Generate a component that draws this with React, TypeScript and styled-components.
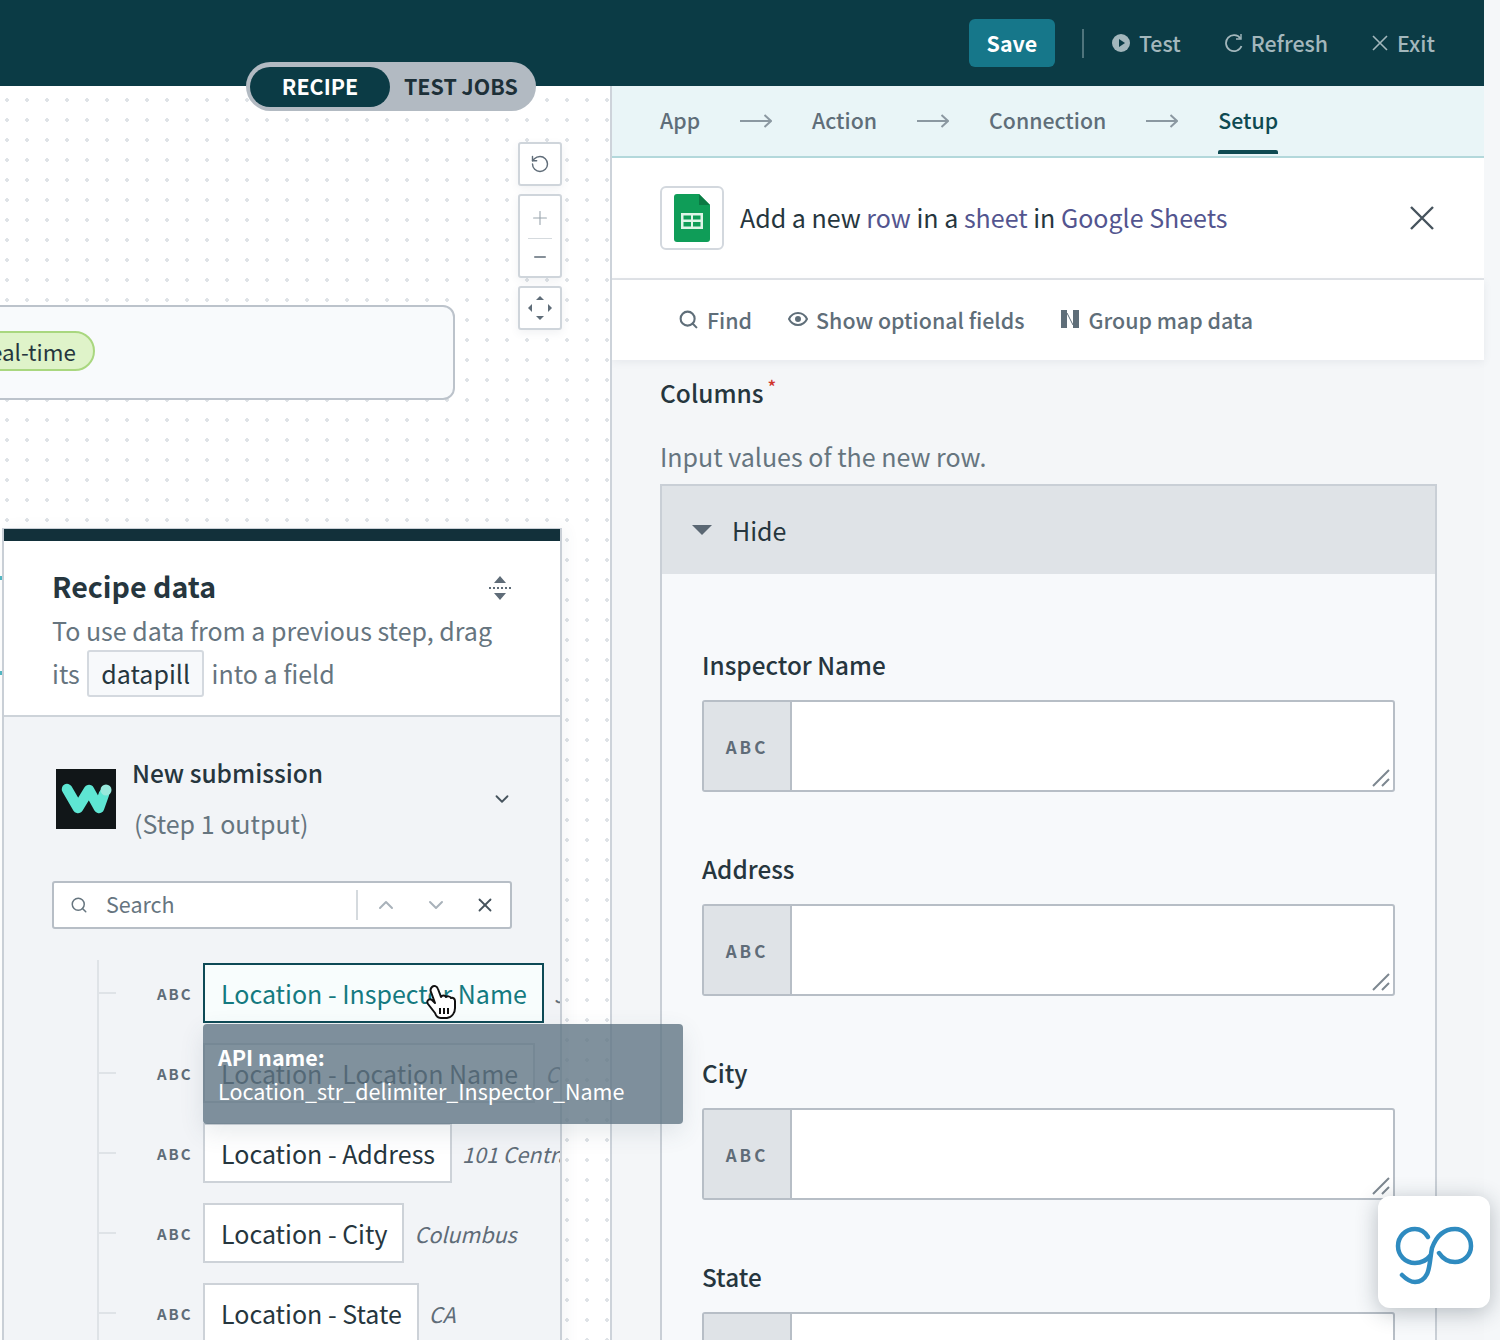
import React from "react"
import styled, { createGlobalStyle } from "styled-components"
import { ChevronDown, ChevronUp, Minus, Plus, RotateCcw, Search, X } from "lucide-react"

const font = `"Noto Sans CJK SC", "Noto Sans", sans-serif`

const Global = createGlobalStyle`
    html, body {
        margin: 0;
        padding: 0;
        background: #f5f7f9;
    }
    * {
        box-sizing: border-box;
    }
`

const Page = styled.div`
    position: relative;
    width: 1500px;
    height: 1340px;
    overflow: hidden;
    font-family: ${font};
    color: #26363e;
    background: #f5f7f9;
`
const Main = styled.div`
    width: 1484px;
    height: 100%;
    display: flex;
    flex-direction: column;
`
const Header = styled.header`
    flex: 0 0 86px;
    background: #0b3b45;
    display: flex;
    align-items: center;
    justify-content: flex-end;
    padding-right: 49px;
`
const SaveButton = styled.button`
    width: 86px;
    height: 48px;
    border: 0;
    border-radius: 6px;
    background: #16778a;
    color: #fff;
    font: 700 21.400px/46px ${font};
    padding: 0;
`
const Separator = styled.span`
    width: 2px;
    height: 29px;
    margin: 0 28px 0 27px;
    background: #4f747c;
`
const HeaderAction = styled.span<{ $gap?: number }>`
    display: flex;
    align-items: center;
    gap: ${p => p.$gap ?? 9}px;
    color: #a3b7bc;
    font-size: 21.400px;
    font-weight: 500;
    line-height: 28px;
    margin-left: ${p => (p.$gap ? 44 : 0)}px;
`
const Toggle = styled.div`
    position: absolute;
    left: 246px;
    top: 62px;
    width: 290px;
    height: 49px;
    padding: 4px;
    display: flex;
    align-items: center;
    border-radius: 25px;
    background: #b2bac2;
    font-size: 21.400px;
    font-weight: 700;
    z-index: 3;
`
const ToggleOn = styled.span`
    width: 140px;
    height: 40px;
    line-height: 38px;
    text-align: center;
    border-radius: 20px;
    background: #0b3b45;
    color: #fff;
`
const ToggleOff = styled.span`
    margin-left: 14px;
    margin-top: -2px;
    color: #1d3038;
`
const Body = styled.div`
    flex: 1;
    min-height: 0;
    display: flex;
`
const Canvas = styled.div`
    position: relative;
    flex: 0 0 612px;
    border-right: 2px solid #cdd3da;
    background-color: #fff;
    background-image: radial-gradient(circle, #dfe3e7 1.6px, transparent 2px);
    background-size: 20px 20px;
    background-position: -3px 4px;
    z-index: 2;
`
const NodeCard = styled.div`
    position: absolute;
    left: -200px;
    top: 219px;
    width: 655px;
    height: 95px;
    padding: 0 0 4px 155px;
    display: flex;
    align-items: center;
    border: 2px solid #bcc3cb;
    border-radius: 12px;
    background: #f8fafc;
`
const TimePill = styled.span`
    height: 40px;
    padding: 0 17px;
    line-height: 36px;
    font-size: 22.400px;
    border: 2px solid #a9d77f;
    border-radius: 20px;
    background: #dff3c9;
    color: #26363e;
`
const Controls = styled.div`
    position: absolute;
    left: 518px;
    top: 56px;
    display: flex;
    flex-direction: column;
    gap: 8px;
`
const ControlBox = styled.div<{ $double?: boolean }>`
    width: 44px;
    height: ${p => (p.$double ? 84 : 44)}px;
    display: flex;
    flex-direction: column;
    align-items: center;
    justify-content: center;
    border: 2px solid #cfd5db;
    border-radius: 3px;
    background: #fff;
    box-shadow: 0 3px 8px rgba(60, 80, 100, 0.08);
    color: #5f6c78;
`
const ControlRule = styled.span`
    width: 24px;
    height: 1px;
    margin: 9px 0;
    background: #d5dade;
`
const Marks = styled.span<{ $y: number }>`
    position: absolute;
    left: 0;
    top: ${p => p.$y}px;
    width: 2px;
    height: 4px;
    background: #52b8c4;
`
const RecipePanel = styled.section`
    position: absolute;
    left: 2px;
    top: 442px;
    width: 560px;
    bottom: -20px;
    border: 2px solid #c9cfd6;
    border-top-width: 1px;
    background: #f2f4f7;
    box-shadow: 4px 0 14px rgba(60, 80, 100, 0.06);
`
const PanelBar = styled.div`
    height: 12px;
    background: #12303a;
`
const PanelHead = styled.div`
    position: relative;
    height: 176px;
    padding: 26px 40px 0 48px;
    background: #fff;
    border-bottom: 2px solid #cdd3d9;
`
const PanelTitle = styled.h2`
    margin: 0;
    font-size: 28.600px;
    font-weight: 700;
    line-height: 38px;
    color: #26363e;
`
const PanelText = styled.p`
    margin: 5px 0 0;
    font-size: 25px;
    line-height: 40px;
    color: #66757f;
`
const Datapill = styled.span`
    display: inline-block;
    height: 47px;
    line-height: 42px;
    margin: 0 2px;
    padding: 0 12px;
    border: 2px solid #d4d9df;
    border-radius: 3px;
    background: #f7f9fb;
    color: #26363e;
`
const ExpandIcon = styled.svg`
    position: absolute;
    right: 49px;
    top: 34px;
`
const Source = styled.div`
    display: flex;
    align-items: center;
    margin: 0 47px 0 52px;
    padding-top: 26px;
    height: 138px;
`
const SourceText = styled.div`
    flex: 1;
    margin: -3px 0 0 16px;
`
const SourceName = styled.div`
    font-size: 24.500px;
    font-weight: 500;
    line-height: 36px;
`
const SourceStep = styled.div`
    margin: 14px 0 0 2px;
    font-size: 25px;
    line-height: 36px;
    color: #66757f;
`
const SearchBox = styled.div`
    display: flex;
    align-items: center;
    width: 460px;
    height: 48px;
    margin: 26px 0 0 48px;
    padding-left: 16px;
    border: 2px solid #b7bec6;
    border-radius: 3px;
    background: #fff;
    color: #66757f;
`
const SearchText = styled.span`
    width: 252px;
    height: 30px;
    margin-left: 18px;
    line-height: 28px;
    font-size: 21.500px;
    border-right: 2px solid #d5dade;
`
const SearchIcons = styled.span`
    display: flex;
    align-items: center;
    gap: 26px;
    margin-left: 16px;
`
const Tree = styled.div`
    margin: 31px 0 0 93px;
    padding-top: 3px;
    border-left: 2px solid #dfe3e7;
`
const Row = styled.div`
    display: flex;
    align-items: center;
    height: 60px;
    margin-bottom: 20px;
`
const Tick = styled.span`
    flex: 0 0 17px;
    height: 2px;
    background: #dfe3e7;
`
const TypeTag = styled.span`
    flex: 0 0 46px;
    margin-left: 41px;
    font-size: 15px;
    font-weight: 700;
    letter-spacing: 2px;
    color: #5f6c78;
`
const Pill = styled.span<{ $active?: boolean }>`
    position: relative;
    flex: 0 0 auto;
    height: 60px;
    padding: 0 15px 0 16px;
    line-height: 56px;
    font-size: 25px;
    white-space: nowrap;
    border: 2px solid ${p => (p.$active ? "#0e4a56" : "#cdd2d8")};
    background: ${p => (p.$active ? "#f8fdfd" : "#fff")};
    color: ${p => (p.$active ? "#157a80" : "#26363e")};
`
const Sample = styled.span`
    flex: 1;
    min-width: 0;
    margin-left: 10px;
    overflow: hidden;
    white-space: nowrap;
    font-size: 21.500px;
    font-style: italic;
    color: #5f6c78;
`
const Tooltip = styled.div`
    position: absolute;
    left: -2px;
    top: 59px;
    width: 480px;
    height: 100px;
    padding: 16px 15px;
    border-radius: 4px;
    background: rgba(96, 117, 132, 0.8);
    box-shadow: 0 8px 24px rgba(60, 80, 100, 0.12);
    color: #fff;
    font-size: 21.500px;
    line-height: 34px;
    z-index: 5;
`
const TooltipLabel = styled.div`
    font-weight: 700;
`
const Hand = styled.svg`
    position: absolute;
    left: 221px;
    top: 19px;
    z-index: 6;
`
const Panel = styled.div`
    flex: 1;
    min-width: 0;
    display: flex;
    flex-direction: column;
`
const Steps = styled.nav`
    flex: 0 0 72px;
    display: flex;
    align-items: center;
    padding: 0 0 3px 48px;
    background: #e9f5f7;
    border-bottom: 2px solid #b3d8db;
    font-size: 21.300px;
    font-weight: 500;
    color: #5f6e79;
`
const Step = styled.span<{ $active?: boolean }>`
    position: relative;
    color: ${p => (p.$active ? "#0e4a52" : "#5f6e79")};
    ${p => p.$active && `
        &::after {
            content: "";
            position: absolute;
            left: 0;
            right: 0;
            bottom: -19px;
            height: 4px;
            border-radius: 2px 2px 0 0;
            background: #0e4a52;
        }
    `}
`
const StepArrow = styled.svg`
    margin: 3px 40px 0;
`
const TitleRow = styled.div`
    flex: 0 0 122px;
    display: flex;
    align-items: center;
    padding: 0 50px 0 48px;
    background: #fff;
    border-bottom: 2px solid #e1e4e8;
`
const AppIcon = styled.span`
    flex: 0 0 64px;
    height: 64px;
    display: flex;
    align-items: center;
    justify-content: center;
    border: 2px solid #d3d8de;
    border-radius: 6px;
    margin-right: 16px;
`
const Title = styled.div`
    flex: 1;
    font-size: 25px;
    line-height: 40px;
    margin-top: -3px;
    color: #26363e;
`
const TitleLink = styled.span`
    color: #53558f;
`
const Toolbar = styled.div`
    position: relative;
    flex: 0 0 80px;
    display: flex;
    align-items: center;
    padding: 0 0 2px 66px;
    gap: 36px;
    background: #fff;
    box-shadow: 0 2px 8px rgba(60, 80, 100, 0.08);
    font-size: 21.400px;
    font-weight: 500;
    color: #5f6e79;
    z-index: 1;
`
const ToolItem = styled.span`
    display: flex;
    align-items: center;
    gap: 8px;
`
const Content = styled.div`
    flex: 1;
    min-height: 0;
    padding: 13px 47px 0 48px;
    background: #f4f6f8;
`
const SectionLabel = styled.div`
    font-size: 24.500px;
    font-weight: 500;
    line-height: 40px;
`
const Required = styled.sup`
    margin-left: 4px;
    font-size: 18px;
    line-height: 0;
    color: #d0342c;
`
const Hint = styled.p`
    margin: 23px 0 8px;
    font-size: 25px;
    line-height: 40px;
    color: #66757f;
`
const Group = styled.div`
    border: 2px solid #c9cfd6;
    border-bottom: 0;
    background: #f7f9fb;
`
const GroupHead = styled.div`
    height: 88px;
    display: flex;
    align-items: center;
    gap: 20px;
    padding-left: 30px;
    background: #dfe3e7;
    font-size: 25px;
    color: #26363e;
`
const Caret = styled.span`
    width: 0;
    height: 0;
    border-left: 10px solid transparent;
    border-right: 10px solid transparent;
    border-top: 10px solid #5a6773;
`
const Fields = styled.div`
    padding: 73px 40px 0 40px;
`
const Field = styled.div`
    margin-bottom: 59px;
`
const FieldLabel = styled.label`
    display: block;
    margin-bottom: 17px;
    font-size: 24.300px;
    font-weight: 500;
    line-height: 36px;
`
const InputBox = styled.div`
    position: relative;
    display: flex;
    height: 92px;
    border: 2px solid #b7bec6;
    border-radius: 3px;
    background: #fff;
`
const InputType = styled.span`
    flex: 0 0 88px;
    display: flex;
    align-items: center;
    justify-content: center;
    border-right: 2px solid #b7bec6;
    background: #dfe3e7;
    font-size: 17px;
    font-weight: 700;
    letter-spacing: 3px;
    color: #5f6c78;
`
const Grip = styled.svg`
    position: absolute;
    right: 3px;
    bottom: 3px;
`
const GoWidget = styled.div`
    position: absolute;
    left: 1378px;
    top: 1196px;
    width: 112px;
    height: 112px;
    border-radius: 12px;
    background: #fff;
    box-shadow: 0 4px 22px rgba(30, 45, 60, 0.3);
    z-index: 10;
`

const rows = [
    { name: "Location - Inspector Name", sample: "John", active: true },
    { name: "Location - Location Name", sample: "Central" },
    { name: "Location - Address", sample: "101 Central Ave" },
    { name: "Location - City", sample: "Columbus" },
    { name: "Location - State", sample: "CA" },
]
const fields = ["Inspector Name", "Address", "City", "State"]

function Arrow() {
    return (
        <StepArrow width="32" height="14" viewBox="0 0 32 14" fill="none" stroke="#8b98a1" strokeWidth="2">
            <path d="M0 7h31M24.500 1l6.500 6-6.500 6" />
        </StepArrow>
    )
}

export default function App() {
    return (
        <Page>
            <Global />
            <Main>
                <Header>
                    <SaveButton>Save</SaveButton>
                    <Separator />
                    <HeaderAction>
                        <svg width="18" height="18" viewBox="0 0 18 18">
                            <circle cx="9" cy="9" r="9" fill="#a3b7bc" />
                            <path d="M7 5l6 4-6 4z" fill="#0b3b45" />
                        </svg>
                        Test
                    </HeaderAction>
                    <HeaderAction $gap={8}>
                        <svg width="18" height="20" viewBox="0 0 18 20" fill="none" stroke="#a3b7bc" strokeWidth="1.800">
                            <path d="M15.500 5.500A8 8 0 1 0 16.500 13" />
                            <path d="M16 1v5h-5" strokeWidth="1.400" />
                        </svg>
                        Refresh
                    </HeaderAction>
                    <HeaderAction $gap={9}>
                        <svg width="16" height="16" viewBox="0 0 16 16" stroke="#a3b7bc" strokeWidth="1.600">
                            <path d="M1 1l14 14M15 1L1 15" />
                        </svg>
                        Exit
                    </HeaderAction>
                </Header>
                <Body>
                    <Canvas>
                        <NodeCard>
                            <TimePill>Real-time</TimePill>
                        </NodeCard>
                        <Controls>
                            <ControlBox>
                                <RotateCcw size={20} strokeWidth={1.7} />
                            </ControlBox>
                            <ControlBox $double>
                                <Plus size={22} strokeWidth={1.2} color="#9aa5ae" />
                                <ControlRule />
                                <Minus size={18} strokeWidth={2} />
                            </ControlBox>
                            <ControlBox>
                                <svg width="26" height="26" viewBox="0 0 26 26" fill="#5f6c78">
                                    <path d="M13 1l4 4H9zM13 25l-4-4h8zM1 13l4-4v8zM25 13l-4 4V9z" />
                                </svg>
                            </ControlBox>
                        </Controls>
                        <Marks $y={490} />
                        <Marks $y={585} />
                        <RecipePanel>
                            <PanelBar />
                            <PanelHead>
                                <PanelTitle>Recipe data</PanelTitle>
                                <PanelText>
                                    To use data from a previous step, drag its <Datapill>datapill</Datapill> into a field
                                </PanelText>
                                <ExpandIcon width="22" height="26" viewBox="0 0 22 26" fill="#5f6c78">
                                    <path d="M11 1l6 7H5zM11 25l-6-7h12z" />
                                    <path d="M0 13h22" stroke="#5f6c78" strokeWidth="2" strokeDasharray="2 2" />
                                </ExpandIcon>
                            </PanelHead>
                            <Source>
                                <svg width="60" height="60" viewBox="0 0 60 60">
                                    <rect width="60" height="60" fill="#111618" />
                                    <path d="M11 20l11 19 11-18 10 18 5-14" fill="none" stroke="#5ee6d3" strokeWidth="10.500" strokeLinecap="round" strokeLinejoin="round" />
                                    <circle cx="50" cy="21" r="5.500" fill="#98e9dc" />
                                </svg>
                                <SourceText>
                                    <SourceName>New submission</SourceName>
                                    <SourceStep>(Step 1 output)</SourceStep>
                                </SourceText>
                                <ChevronDown size={22} strokeWidth={2} color="#46535d" />
                            </Source>
                            <SearchBox>
                                <Search size={18} strokeWidth={2} />
                                <SearchText>Search</SearchText>
                                <SearchIcons>
                                    <ChevronUp size={24} strokeWidth={2} color="#a9b2ba" />
                                    <ChevronDown size={24} strokeWidth={2} color="#a9b2ba" />
                                    <X size={22} strokeWidth={2} color="#46535d" />
                                </SearchIcons>
                            </SearchBox>
                            <Tree>
                                {rows.map(row => (
                                    <Row key={row.name}>
                                        <Tick />
                                        <TypeTag>ABC</TypeTag>
                                        <Pill $active={row.active}>
                                            {row.name}
                                            {row.active && (
                                                <>
                                                    <Tooltip>
                                                        <TooltipLabel>API name:</TooltipLabel>
                                                        Location_str_delimiter_Inspector_Name
                                                    </Tooltip>
                                                    <Hand width="30" height="36" viewBox="0 0 30 36">
                                                        <path
                                                            d="M6 3c2-2 5-1 6 2l3 8c1-2 4-2 5 0 1-1 4-1 5 1 2-1 4 1 4 3v7c0 5-3 9-8 10h-6c-3 0-5-2-6-5l-7-9c-2-3 1-6 4-4l3 3L5 8C4 6 5 4 6 3z"
                                                            fill="#fff"
                                                            stroke="#111"
                                                            strokeWidth="2"
                                                            strokeLinejoin="round"
                                                        />
                                                        <path d="M14 24v6M18 24v6M22 24v6" stroke="#111" strokeWidth="2" />
                                                    </Hand>
                                                </>
                                            )}
                                        </Pill>
                                        <Sample>{row.sample}</Sample>
                                    </Row>
                                ))}
                            </Tree>
                        </RecipePanel>
                    </Canvas>
                    <Panel>
                        <Steps>
                            <Step>App</Step>
                            <Arrow />
                            <Step>Action</Step>
                            <Arrow />
                            <Step>Connection</Step>
                            <Arrow />
                            <Step $active>Setup</Step>
                        </Steps>
                        <TitleRow>
                            <AppIcon>
                                <svg width="36" height="48" viewBox="0 0 36 48">
                                    <path d="M3 0h22l11 11v34a3 3 0 0 1-3 3H3a3 3 0 0 1-3-3V3a3 3 0 0 1 3-3z" fill="#0f9d58" />
                                    <path d="M25 0l11 11H25z" fill="#0b7a44" />
                                    <path d="M7 19h22v16H7z" fill="#dff5e8" />
                                    <path d="M9.500 21.500h7.500v4H9.500zM19 21.500h7.500v4H19zM9.500 28h7.500v4.500H9.500zM19 28h7.500v4.500H19z" fill="#0f9d58" />
                                </svg>
                            </AppIcon>
                            <Title>
                                Add a new <TitleLink>row</TitleLink> in a <TitleLink>sheet</TitleLink> in <TitleLink>Google Sheets</TitleLink>
                            </Title>
                            <svg width="24" height="24" viewBox="0 0 24 24" stroke="#46535d" strokeWidth="2.400">
                                <path d="M1 1l22 22M23 1L1 23" />
                            </svg>
                        </TitleRow>
                        <Toolbar>
                            <ToolItem>
                                <Search size={21} strokeWidth={2.4} />
                                Find
                            </ToolItem>
                            <ToolItem>
                                <svg width="20" height="14" viewBox="0 0 20 14" fill="none" stroke="#5f6e79" strokeWidth="2">
                                    <path d="M1 7c2-4 5-6 9-6s7 2 9 6c-2 4-5 6-9 6S3 11 1 7z" />
                                    <circle cx="10" cy="7" r="2" fill="#5f6e79" />
                                </svg>
                                Show optional fields
                            </ToolItem>
                            <ToolItem>
                                <svg width="20" height="18" viewBox="0 0 20 18" fill="#5f6e79">
                                    <rect x="1" width="6" height="18" />
                                    <rect x="13" width="6" height="18" />
                                    <path d="M7 3l6 12" stroke="#5f6e79" strokeWidth="1" />
                                </svg>
                                Group map data
                            </ToolItem>
                        </Toolbar>
                        <Content>
                            <SectionLabel>
                                Columns<Required>*</Required>
                            </SectionLabel>
                            <Hint>Input values of the new row.</Hint>
                            <Group>
                                <GroupHead>
                                    <Caret />
                                    Hide
                                </GroupHead>
                                <Fields>
                                    {fields.map(name => (
                                        <Field key={name}>
                                            <FieldLabel>{name}</FieldLabel>
                                            <InputBox>
                                                <InputType>ABC</InputType>
                                                <Grip width="18" height="18" viewBox="0 0 18 18" stroke="#7d8790" strokeWidth="2">
                                                    <path d="M1 17L17 1M10 17l7-7" />
                                                </Grip>
                                            </InputBox>
                                        </Field>
                                    ))}
                                </Fields>
                            </Group>
                        </Content>
                    </Panel>
                </Body>
            </Main>
            <Toggle>
                <ToggleOn>RECIPE</ToggleOn>
                <ToggleOff>TEST JOBS</ToggleOff>
            </Toggle>
            <GoWidget>
                <svg width="112" height="112" viewBox="0 0 112 112" fill="none" stroke="#2f8bc0" strokeWidth="4.500" strokeLinecap="round">
                    <path d="M50 41C47 36 42 33 37 33 27 33 20 41 20 50s7 17 17 17c6 0 11-2 15-7" />
                    <path d="M61 57c4 6 10 9 16 9 9 0 16-7 16-16s-7-17-16-17c-12 0-19 8-23 19-2 10-2 20-5 26-3 6-8 8-12 8-5 0-9-3-13-7" />
                </svg>
            </GoWidget>
        </Page>
    )
}
